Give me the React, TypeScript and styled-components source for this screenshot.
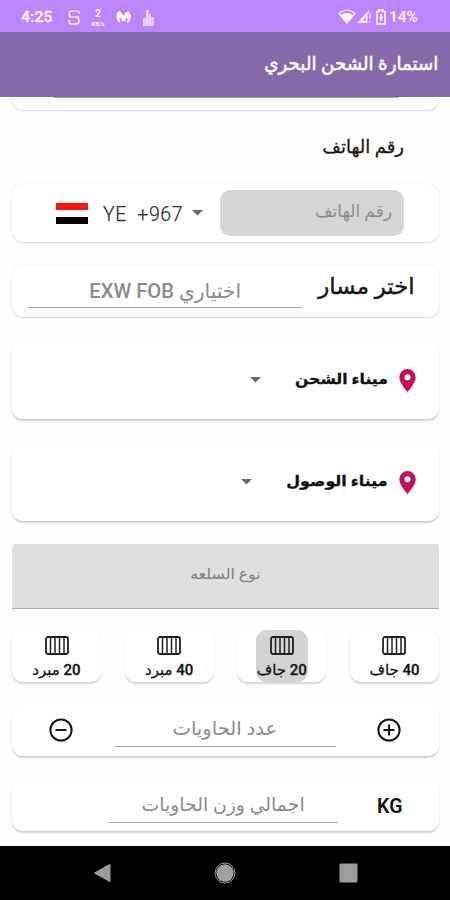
import React from "react";
import styled, { createGlobalStyle } from "styled-components";

const Global = createGlobalStyle`
  * { box-sizing: border-box; }
  body { margin: 0; background: #fefefe; font-family: Roboto, "DejaVu Sans", sans-serif; }
  svg { display: block; flex: none; }
`;

const Screen = styled.div`
  width: 450px;
  height: 900px;
  display: flex;
  flex-direction: column;
  overflow: hidden;
  background: #fefefe;
`;

const StatusBar = styled.div`
  height: 32px;
  flex: none;
  display: flex;
  align-items: center;
  padding: 2px 32px 0 21px;
  background: #bb86fc;
  color: #fdf5ff;
  font-size: 15.5px;
  font-weight: 500;
`;

const Clock = styled.span`
  width: 46px;
  letter-spacing: 0.3px;
  -webkit-text-stroke: 0.3px currentColor;
`;

const Speed = styled.div`
  width: 18px;
  margin: 0 9px 0 8px;
  display: flex;
  flex-direction: column;
  align-items: center;
  font-weight: 700;
`;

const SpeedValue = styled.span`
  font-size: 10.5px;
  line-height: 12px;
`;

const SpeedUnit = styled.span`
  font-size: 6px;
  line-height: 7px;
`;

const StatusRight = styled.div`
  margin-left: auto;
  display: flex;
  align-items: center;
`;

const AppBar = styled.header`
  height: 65px;
  flex: none;
  display: flex;
  align-items: center;
  justify-content: flex-end;
  padding: 0 12px 1px 0;
  background: #8669ab;
  color: #fff;
`;

const Form = styled.main`
  height: 749px;
  flex: none;
  display: flex;
  flex-direction: column;
  padding: 0 11px 0 12px;
`;

const Card = styled.section<{ $h: number; $mt: number; $deep?: boolean }>`
  height: ${(p) => p.$h}px;
  margin-top: ${(p) => p.$mt}px;
  flex: none;
  display: flex;
  align-items: center;
  border-radius: 11px;
  background: #fff;
  box-shadow: ${(p) =>
    p.$deep
      ? "0 2px 2px rgba(0, 0, 0, 0.17), 0 1px 1px rgba(0, 0, 0, 0.05)"
      : "0 1px 1.5px rgba(0, 0, 0, 0.13), 0 0 1.5px rgba(0, 0, 0, 0.12)"};
`;

const PreviousCard = styled(Card)`
  border-radius: 0 0 11px 11px;
  align-items: flex-start;
  justify-content: center;
`;

const PreviousLine = styled.div`
  width: 346px;
  height: 1px;
  background: #aaa1b5;
`;

const Ink = styled.span<{
  $size: number;
  $sx?: number;
  $weight?: number;
  $dy?: number;
  $origin?: string;
  $stroke?: number;
}>`
  display: inline-block;
  white-space: nowrap;
  font-size: ${(p) => p.$size}px;
  line-height: 1.3;
  font-weight: ${(p) => p.$weight ?? 400};
  -webkit-text-stroke: ${(p) => p.$stroke ?? 0}px currentColor;
  transform-origin: ${(p) => p.$origin ?? "right"} center;
  transform: translateY(${(p) => p.$dy ?? 0}px) scaleX(${(p) => p.$sx ?? 1});
`;

const PhoneLabel = styled.div`
  height: 74px;
  flex: none;
  display: flex;
  align-items: center;
  justify-content: flex-end;
  padding-right: 35px;
  color: #161616;
`;

const Flag = styled.div`
  width: 32px;
  height: 21px;
  margin: 0 15px 0 44px;
  flex: none;
  border-top: 7px solid #fb1408;
  border-bottom: 7px solid #000;
`;

const Dial = styled.span`
  width: 89px;
  padding-top: 2px;
  flex: none;
  white-space: nowrap;
  color: #303030;
  font-size: 19.5px;
  font-weight: 300;
  word-spacing: 5px;
  letter-spacing: 0.6px;
  -webkit-text-stroke: 0.25px currentColor;
`;

const PhoneInput = styled.div`
  width: 184px;
  height: 46px;
  margin-left: 17px;
  flex: none;
  display: flex;
  align-items: center;
  justify-content: flex-end;
  padding: 0 12px 4px 0;
  border-radius: 10px;
  background: #d5d5d5;
  color: #8b8b8b;
`;

const LineInput = styled.div<{ $w: number; $h: number }>`
  width: ${(p) => p.$w}px;
  height: ${(p) => p.$h}px;
  flex: none;
  display: flex;
  align-items: center;
  justify-content: center;
  border-bottom: 1.5px solid #a6a6a6;
  color: #8b8b8b;
`;

const RouteCard = styled(Card)`
  padding-left: 16px;
`;

const RouteTitle = styled.div`
  flex: 1;
  display: flex;
  justify-content: flex-end;
  padding: 0 24px 8px 0;
  color: #151515;
`;

const PortCard = styled(Card)`
  justify-content: flex-end;
  padding-right: 23px;
  color: #101010;
`;

const PortName = styled.div<{ $w: number }>`
  width: ${(p) => p.$w}px;
  margin-right: 11px;
  display: flex;
  justify-content: flex-end;
`;

const GoodsField = styled.div`
  height: 65px;
  margin-top: 23px;
  flex: none;
  display: flex;
  align-items: center;
  justify-content: center;
  padding-bottom: 2px;
  border-bottom: 1.5px solid #aaa;
  border-radius: 3px 3px 0 0;
  background: #dfdfdf;
  color: #808080;
`;

const Tiles = styled.div`
  height: 52px;
  margin-top: 21px;
  flex: none;
  display: flex;
  justify-content: space-between;
`;

const Tile = styled.div`
  width: 89px;
  height: 52px;
  display: flex;
  justify-content: center;
  border-radius: 11px;
  background: #fff;
  box-shadow: 0 1.5px 2px rgba(0, 0, 0, 0.17);
`;

const TileBody = styled.div<{ $on?: boolean }>`
  width: 52px;
  height: 52px;
  display: flex;
  flex-direction: column;
  align-items: center;
  gap: 5px;
  padding-top: 6px;
  border-radius: 11px;
  background: ${(p) => (p.$on ? "#d3d3d3" : "transparent")};
  color: #151515;
`;

const CountCard = styled(Card)`
  justify-content: space-between;
  padding: 0 38px 2px 37px;
`;

const WeightCard = styled(Card)`
  gap: 39px;
  padding-left: 97px;
`;

const Unit = styled.span`
  padding-top: 1px;
  color: #111;
  font-size: 19.5px;
  font-weight: 600;
  letter-spacing: 0.3px;
`;

const NavBar = styled.nav`
  height: 54px;
  flex: none;
  display: flex;
  align-items: center;
  justify-content: space-between;
  padding: 0 92px 0 93px;
  background: #000;
`;

const Caret = () => (
  <svg width="11" height="6" viewBox="0 0 11 6"><path d="M0 0H11L5.5 5.5Z" fill="#696969" /></svg>
);

const Pin = () => (
  <svg width="17" height="23" viewBox="0 0 17 23">
    <path fillRule="evenodd" fill="#c2105c" d="M8.5 0A8.2 8.2 0 0 0 .3 8.2C.3 14.3 8.5 23 8.5 23S16.7 14.3 16.7 8.2A8.2 8.2 0 0 0 8.5 0Zm0 5.2a3 3 0 1 1 0 6 3 3 0 0 1 0-6Z" />
  </svg>
);

const ContainerIcon = () => (
  <svg width="24" height="19" viewBox="0 0 24 19" fill="none" stroke="#202020">
    <rect x="1" y="1" width="22" height="17" rx="2" strokeWidth="1.8" />
    <path d="M5.5 2V17M10 2V17M14.5 2V17M19 2V17" strokeWidth="1.5" />
  </svg>
);

const RoundIcon = ({ plus }: { plus?: boolean }) => (
  <svg width="24" height="24" viewBox="0 0 24 24" fill="none" stroke="#151515" strokeWidth="2">
    <circle cx="12" cy="12" r="10.6" />
    <path d={plus ? "M6.5 12H17.5M12 6.5V17.5" : "M6.5 12H17.5"} />
  </svg>
);

const tiles = [
  { label: "20 مبرد" },
  { label: "40 مبرد" },
  { label: "20 جاف", on: true },
  { label: "40 جاف" },
];

export default function App() {
  return (
    <>
      <Global />
      <Screen>
        <StatusBar>
          <Clock>4:25</Clock>
          <svg width="14" height="17" viewBox="0 0 14 17" fill="none" stroke="#f3e3ff" strokeWidth="1.7">
            <path d="M12 5V4Q12 2 9 2H5Q2 2 2 5T5 8H9Q12 8 12 11.5T9 15H5Q2 15 2 12V11M2 8H12" />
          </svg>
          <Speed>
            <SpeedValue>2</SpeedValue>
            <SpeedUnit>KB/s</SpeedUnit>
          </Speed>
          <svg width="15" height="14" viewBox="0 0 15 14" fill="#fff">
            <path d="M3 1Q5.500 2 7.500 6Q9.500 2 12 1Q15 4 14.500 8Q14 11.500 10.500 13Q12 9.500 11 6.500Q9.500 9 9 11H6Q5.500 9 4 6.500Q3 9.500 4.500 13Q1 11.500 .5 8Q0 4 3 1Z" />
          </svg>
          <svg width="23" height="17" viewBox="0 0 23 17" fill="#ecd8ff">
            <path d="M12 9h2.700v8H12zM15 1h2.700v16H15zM18 5h2v12h-2zM20.300 8h2.500v9h-2.500z" />
          </svg>
          <StatusRight>
            <svg width="18" height="15" viewBox="0 0 18 15">
              <path d="M1 4.5Q9-2.5 17 4.5L9 14Z" fill="none" stroke="#fff" strokeWidth="1.2" />
              <path d="M3 6Q9 2 15 6L9 14Z" fill="#fff" />
            </svg>
            <svg width="17" height="15" viewBox="0 0 17 15">
              <path fillRule="evenodd" d="M1 14L13 1V4H11.500V14ZM7 12H10V8Z" fill="#f5e9ff" />
              <path d="M14 4v6M14 12v2" stroke="#f5e9ff" strokeWidth="1.3" />
            </svg>
            <svg width="16" height="16" viewBox="0 0 16 16" fill="none" stroke="#fff" strokeWidth="1.5">
              <path d="M4 2.500H6V1H10V2.500H12V15H4ZM8 5V12M6.200 8.500H9.800" />
            </svg>
            <Ink $size={15.5} $weight={500}>14%</Ink>
          </StatusRight>
        </StatusBar>
        <AppBar>
          <Ink dir="rtl" $size={19} $sx={0.96} $stroke={0.5}>استمارة الشحن البحري</Ink>
        </AppBar>
        <Form>
          <PreviousCard $h={13} $mt={0}><PreviousLine /></PreviousCard>
          <PhoneLabel><Ink dir="rtl" $size={18} $stroke={0.3}>رقم الهاتف</Ink></PhoneLabel>
          <Card $h={58} $mt={0}>
            <Flag />
            <Dial>YE +967</Dial>
            <Caret />
            <PhoneInput><Ink dir="rtl" $size={17}>رقم الهاتف</Ink></PhoneInput>
          </Card>
          <RouteCard $h={52} $mt={23}>
            <LineInput $w={274} $h={34}>
              <Ink dir="rtl" $size={20} $weight={500} $sx={1.01} $origin="center">اختياري EXW FOB</Ink>
            </LineInput>
            <RouteTitle><Ink dir="rtl" $size={22} $sx={1.04} $stroke={0.4}>اختر مسار</Ink></RouteTitle>
          </RouteCard>
          <PortCard $h={78} $mt={24} $deep>
            <Caret /><PortName $w={127}><Ink dir="rtl" $size={15} $weight={700} $sx={1.045} $stroke={0.3}>ميناء الشحن</Ink></PortName><Pin />
          </PortCard>
          <PortCard $h={78} $mt={24} $deep>
            <Caret /><PortName $w={136}><Ink dir="rtl" $size={15} $weight={700} $sx={1.06} $stroke={0.3}>ميناء الوصول</Ink></PortName><Pin />
          </PortCard>
          <GoodsField><Ink dir="rtl" $size={15} $sx={1.05} $origin="center">نوع السلعه</Ink></GoodsField>
          <Tiles>
            {tiles.map((t) => (
              <Tile key={t.label}>
                <TileBody $on={t.on}>
                  <ContainerIcon />
                  <Ink dir="rtl" $size={15} $weight={500} $dy={1} $stroke={0.3} $origin="center">{t.label}</Ink>
                </TileBody>
              </Tile>
            ))}
          </Tiles>
          <CountCard $h={51} $mt={23} $deep>
            <RoundIcon />
            <LineInput $w={221} $h={34}><Ink dir="rtl" $size={19} $sx={1.03} $origin="center">عدد الحاويات</Ink></LineInput>
            <RoundIcon plus />
          </CountCard>
          <WeightCard $h={51} $mt={24} $deep>
            <LineInput $w={229} $h={34}><Ink dir="rtl" $size={18.5} $sx={1.02} $origin="center">اجمالي وزن الحاويات</Ink></LineInput>
            <Unit>KG</Unit>
          </WeightCard>
        </Form>
        <NavBar>
          <svg width="18" height="20" viewBox="0 0 18 20"><path d="M17.5 .5V19.5L.5 10Z" fill="#9c9c9c" /></svg>
          <svg width="22" height="22" viewBox="0 0 22 22"><circle cx="11" cy="11" r="10" fill="none" stroke="#999" /><circle cx="11" cy="11" r="8.7" fill="#a0a0a0" /></svg>
          <svg width="19" height="20" viewBox="0 0 19 20"><rect x=".5" y=".5" width="18" height="19" rx="1" fill="#9c9c9c" /></svg>
        </NavBar>
      </Screen>
    </>
  );
}
